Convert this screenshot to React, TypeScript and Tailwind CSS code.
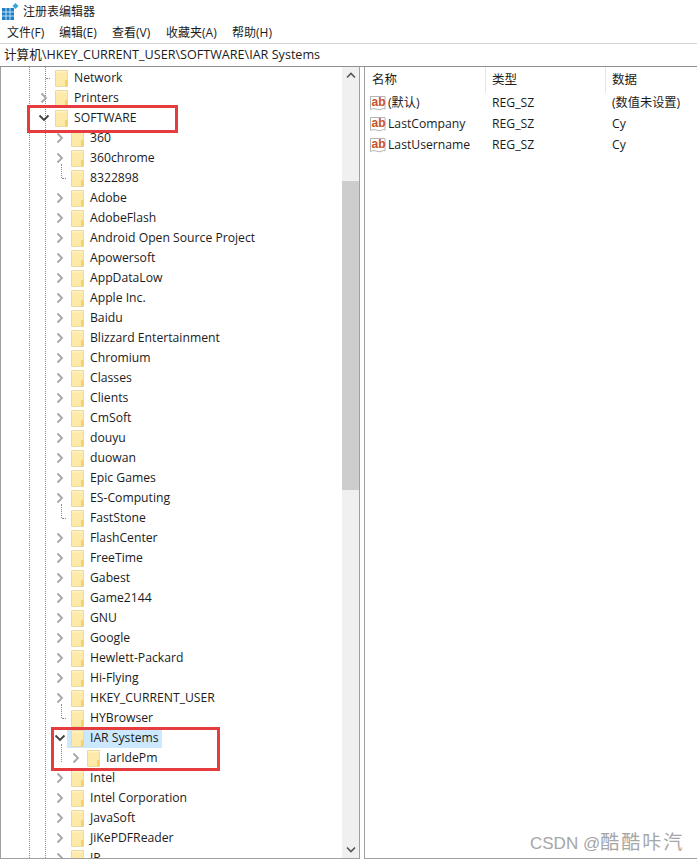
import React from "react";

const font = { fontFamily: '"Open Sans","Noto Sans CJK SC",sans-serif' };

function Folder() {
  return (
    <svg width="13" height="17" viewBox="0 0 13 17" className="shrink-0">
      <path d="M.5.5h12v16H.5z" fill="#fdeaa8" stroke="#eed89a" />
      <path d="M10 10h2.5v6.5H10z" fill="#f6d26c" />
      <path d="M1 1h11v1.5H1z" fill="#fff4c8" />
    </svg>
  );
}

function Chevron({ open }: { open?: boolean }) {
  return open ? (
    <svg width="12" height="8" viewBox="0 0 12 8">
      <path d="M1.5 1.5 6 6l4.5-4.5" fill="none" stroke="#404040" strokeWidth="1.8" />
    </svg>
  ) : (
    <svg width="8" height="12" viewBox="0 0 8 12">
      <path d="M1.5 1.5 6 6l-4.5 4.5" fill="none" stroke="#a6a6a6" strokeWidth="1.8" />
    </svg>
  );
}

type Item = { t: string; lvl: number; k: "open" | "closed" | "leaf"; sel?: boolean; guide?: boolean };

const kids = "360|360chrome|8322898*|Adobe|AdobeFlash|Android Open Source Project|Apowersoft|AppDataLow|Apple Inc.|Baidu|Blizzard Entertainment|Chromium|Classes|Clients|CmSoft|douyu|duowan|Epic Games|ES-Computing|FastStone*|FlashCenter|FreeTime|Gabest|Game2144|GNU|Google|Hewlett-Packard|Hi-Flying|HKEY_CURRENT_USER|HYBrowser*"
  .split("|")
  .map((s): Item => ({ t: s.replace("*", ""), lvl: 1, k: s.endsWith("*") ? "leaf" : "closed" }));

const items: Item[] = [
  { t: "Network", lvl: 0, k: "leaf" },
  { t: "Printers", lvl: 0, k: "closed" },
  { t: "SOFTWARE", lvl: 0, k: "open" },
  ...kids,
  { t: "IAR Systems", lvl: 1, k: "open", sel: true },
  { t: "IarIdePm", lvl: 2, k: "closed", guide: true },
  { t: "Intel", lvl: 1, k: "closed" },
  { t: "Intel Corporation", lvl: 1, k: "closed" },
  { t: "JavaSoft", lvl: 1, k: "closed" },
  { t: "JiKePDFReader", lvl: 1, k: "closed" },
  { t: "JP", lvl: 1, k: "closed" },
];

const indent: Record<number, string> = { 0: "pl-[36px]", 1: "pl-[52px]", 2: "pl-[68px]" };

function Row({ it }: { it: Item }) {
  return (
    <div className={`relative flex h-5 shrink-0 items-center ${indent[it.lvl]}`}>
      <span className="relative flex h-5 w-[13px] shrink-0 items-center justify-start">
        {it.k === "open" && (
          <span className="flex w-full justify-center">
            <Chevron open />
          </span>
        )}
        {it.k === "closed" && (
          <span className="flex w-full justify-center">
            <Chevron />
          </span>
        )}
        {it.k === "leaf" && (
          <>
            <span className="ml-[9px] h-0 w-[7px] border-t border-dotted border-[#8a8a8a]" />
            {it.lvl === 1 && (
              <span className="absolute left-[8px] top-[-4px] h-[14px] border-l border-dotted border-[#8a8a8a]" />
            )}
          </>
        )}
        {it.guide && (
          <span className="absolute left-[-8px] top-[-4px] h-[18px] border-l border-dotted border-[#8a8a8a]" />
        )}
      </span>
      <span className={`ml-[1px] flex h-5 items-center pl-[4px] pr-[3px] ${it.sel ? "bg-[#cce8ff]" : ""}`}>
        <Folder />
        <span className="ml-[6px] whitespace-nowrap">{it.t}</span>
      </span>
    </div>
  );
}

function AbIcon() {
  return (
    <svg width="16" height="17" viewBox="0 0 16 17" className="shrink-0">
      <path d="M.5 1.5h14.5v12.5c-2-1.6-4.2 1.6-7 .6-3-1-5-1.5-7.5-.1z" fill="#fff" stroke="#b4b4b4" />
      <text x="1.5" y="11" fontSize="12" fontWeight="700" fill="#c8502c" fontFamily="Liberation Sans, sans-serif">ab</text>
    </svg>
  );
}

function RowValue({ n, d }: { n: string; d: string }) {
  return (
    <div className="flex h-[21px] items-center">
      <div className="flex w-[122px] items-center pl-[5px]">
        <AbIcon />
        <span className="ml-[2px] whitespace-nowrap">{n}</span>
      </div>
      <div className="w-[120px] pl-[5px]">REG_SZ</div>
      <div className="whitespace-nowrap pl-[5px]">{d}</div>
    </div>
  );
}

export default function App() {
  return (
    <div style={font} className="relative flex h-[860px] w-[697px] flex-col overflow-hidden bg-white text-[12.2px] text-[#1c1c1c]">
      <div className="flex h-[23px] items-center pl-[2px]">
        <svg width="17" height="17" viewBox="0 0 17 17">
          <path d="M0 5h12v12H0z" fill="#1f7fc4" />
          <path d="M4 5v12M8 5v12M0 9h12M0 13h12" stroke="#bfe0f5" />
          <path d="m13.5 0 3 3-3 3-3-3z" fill="#35a5dd" />
        </svg>
        <span className="ml-[4px] text-[12px] text-[#222]">注册表编辑器</span>
      </div>
      <div className="flex h-[20px] items-center pl-[7px] text-[12px]">
        <span className="w-[52px]">文件(F)</span>
        <span className="w-[53px]">编辑(E)</span>
        <span className="w-[54px]">查看(V)</span>
        <span className="w-[66px]">收藏夹(A)</span>
        <span>帮助(H)</span>
      </div>
      <div className="flex h-[24px] items-center border-y border-t-[#d6d6d6] border-b-[#8f8f8f] pl-[4px] text-[12.6px]">
        计算机\HKEY_CURRENT_USER\SOFTWARE\IAR Systems
      </div>
      <div className="flex min-h-0 flex-1">
        <div className="relative flex w-[359px] shrink-0 border-l border-b border-[#a0a0a0]">
          <div className="relative min-w-0 flex-1 overflow-hidden pt-px">
            <div className="absolute left-[28px] top-0 h-full border-l border-dotted border-[#8a8a8a]" />
            <div className="absolute left-[44px] top-0 h-full border-l border-dotted border-[#8a8a8a]" />
            <div className="relative flex flex-col">
              {items.map((it) => (
                <Row key={it.t} it={it} />
              ))}
            </div>
          </div>
          <div className="flex w-[17px] shrink-0 flex-col bg-[#f0f0f0]">
            <div className="flex h-[17px] shrink-0 items-center justify-center">
              <svg width="10" height="7" viewBox="0 0 10 7"><path d="M1 5.5 5 1.5l4 4" fill="none" stroke="#555" strokeWidth="1.6" /></svg>
            </div>
            <div className="mt-[97px] h-[309px] shrink-0 bg-[#cdcdcd]" />
            <div className="flex-1" />
            <div className="flex h-[17px] shrink-0 items-center justify-center">
              <svg width="10" height="7" viewBox="0 0 10 7"><path d="M1 1.5 5 5.5l4-4" fill="none" stroke="#555" strokeWidth="1.6" /></svg>
            </div>
          </div>
        </div>
        <div className="w-[5px] shrink-0 border-l border-[#a0a0a0] bg-white" />
        <div className="min-w-0 flex-1 border-l border-b border-[#a0a0a0]">
          <div className="flex h-[26px] items-center text-[12.5px]">
            <div className="h-full w-[121px] border-r border-[#e5e5e5] pl-[7px] leading-[26px]">名称</div>
            <div className="h-full w-[120px] border-r border-[#e5e5e5] pl-[6px] leading-[26px]">类型</div>
            <div className="h-full pl-[6px] leading-[26px]">数据</div>
          </div>
          <RowValue n="(默认)" d="(数值未设置)" />
          <RowValue n="LastCompany" d="Cy" />
          <RowValue n="LastUsername" d="Cy" />
        </div>
      </div>
      <div className="h-[1px] shrink-0 bg-white" />
      <div className="absolute left-[27px] top-[105px] h-[28px] w-[151px] border-[3px] border-[#e63b3f]" />
      <div className="absolute left-[51px] top-[727px] h-[44px] w-[169px] border-[3px] border-[#e63b3f]" />
      <div className="absolute left-[530px] top-[829px] flex items-center whitespace-nowrap text-[17px] text-[#a6a6a6]" style={{ fontFamily: '"Liberation Sans","Noto Sans CJK SC",sans-serif' }}>
        CSDN @<span className="text-[19px] tracking-[2px]">酷酷咔汽</span>
      </div>
    </div>
  );
}
